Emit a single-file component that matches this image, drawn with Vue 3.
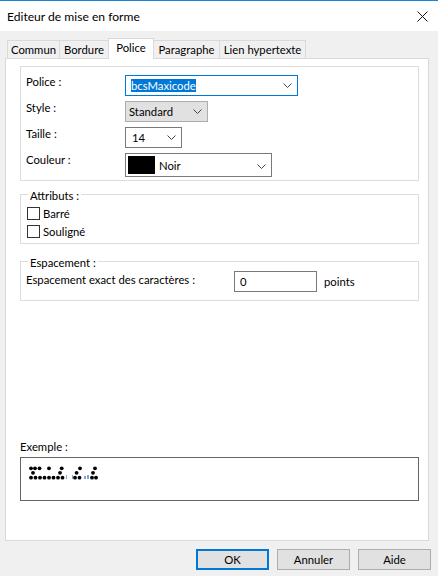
<script setup>
const tabs = [
  { label: 'Commun', width: 53 },
  { label: 'Bordure', width: 50 },
  { label: 'Police', width: 46, active: true },
  { label: 'Paragraphe', width: 67 },
  { label: 'Lien hypertexte', width: 87 },
]

// le rendu de la police bcsMaxicode : des points sur trois lignes
const dots = [
  ...[31, 35, 39.5, 49, 61.7, 80, 95].map(x => [x, 468.3]),
  ...[33, 60, 76.6, 93].map(x => [x, 472.8]),
  ...[31, 35.5, 40, 44.5, 49, 53.5, 58, 62.5, 75, 79.5, 92, 96].map(x => [x, 477.7]),
]
const bits = [[66, 475, 1, 4], [72, 475, 1, 4], [84, 476, 2, 3], [87, 475, 2, 4]]
</script>

<template>
  <div class="dialog">
    <div class="titlebar">
      <span>Editeur de mise en forme</span>
      <svg class="close" width="11" height="11" viewBox="0 0 11 11">
        <path d="M0.5 0.5 L10.5 10.5 M10.5 0.5 L0.5 10.5" stroke="#111" fill="none" />
      </svg>
    </div>

    <div class="content">
      <div class="tabs">
        <div
          v-for="tab in tabs"
          :key="tab.label"
          class="tab"
          :class="{ active: tab.active }"
          :style="{ width: tab.width + 'px' }"
        >{{ tab.label }}</div>
      </div>

      <div class="panel">
        <div class="group font-group">
          <div class="row">
            <label>Police :</label>
            <div class="select focused" style="width: 173px">
              <span class="selected-text">bcsMaxicode</span>
              <svg class="chevron" width="9" height="5" viewBox="0 0 9 5"><path d="M0.5 0.5 L4.5 4.5 L8.5 0.5" /></svg>
            </div>
          </div>
          <div class="row">
            <label>Style :</label>
            <div class="select readonly" style="width: 83px">
              <span>Standard</span>
              <svg class="chevron" width="9" height="5" viewBox="0 0 9 5"><path d="M0.5 0.5 L4.5 4.5 L8.5 0.5" /></svg>
            </div>
          </div>
          <div class="row">
            <label>Taille :</label>
            <div class="select size" style="width: 57px">
              <span>14</span>
              <svg class="chevron" width="9" height="5" viewBox="0 0 9 5"><path d="M0.5 0.5 L4.5 4.5 L8.5 0.5" /></svg>
            </div>
          </div>
          <div class="row">
            <label>Couleur :</label>
            <div class="select color" style="width: 147px">
              <i class="swatch"></i>
              <span>Noir</span>
              <svg class="chevron" width="9" height="5" viewBox="0 0 9 5"><path d="M0.5 0.5 L4.5 4.5 L8.5 0.5" /></svg>
            </div>
          </div>
        </div>

        <div class="group attr-group">
          <span class="legend">Attributs :</span>
          <div class="check"><i></i>Barré</div>
          <div class="check"><i></i>Souligné</div>
        </div>

        <div class="group space-group">
          <span class="legend">Espacement :</span>
          <label>Espacement exact des caractères :</label>
          <div class="num">0</div>
          <span class="unit">points</span>
        </div>

        <div class="example-label">Exemple :</div>
        <div class="example">
          <svg width="100" height="20" viewBox="21 462 100 20">
            <circle v-for="(d, i) in dots" :key="i" :cx="d[0]" :cy="d[1]" r="1.9" />
            <rect v-for="(b, i) in bits" :key="'b' + i" :x="b[0]" :y="b[1]" :width="b[2]" :height="b[3]" fill="#7aa6d8" />
          </svg>
        </div>
      </div>

      <div class="buttons">
        <button class="default">OK</button>
        <button>Annuler</button>
        <button>Aide</button>
      </div>
    </div>
  </div>
</template>

<style>
html, body {
  margin: 0;
  background: #f0f0f0;
}
</style>

<style scoped>
.dialog {
  width: 438px;
  height: 576px;
  box-sizing: border-box;
  border-top: 1px solid #1883d7;
  background: #f0f0f0;
  font-family: Lato, "Noto Sans", sans-serif;
  font-size: 11.3px;
  color: #000;
  display: flex;
  flex-direction: column;
  overflow: hidden;
}

.titlebar {
  height: 30px;
  flex: none;
  background: #fff;
  display: flex;
  align-items: center;
  justify-content: space-between;
  padding: 0 10px 0 7px;
  font-size: 12.1px;
}

.content {
  flex: 1;
  padding: 7px 7px 0 5px;
  display: flex;
  flex-direction: column;
}

.tabs {
  display: flex;
  height: 20px;
  padding-left: 2px;
  align-items: flex-end;
}

.tab {
  box-sizing: border-box;
  height: 18px;
  margin-right: -1px;
  border: 1px solid #d9d9d9;
  border-bottom: none;
  background: #f0f0f0;
  text-align: center;
  line-height: 18px;
}

.tab.active {
  background: #fff;
  position: relative;
  z-index: 1;
  margin-bottom: -1px;
  height: 21px;
  line-height: 17px;
}

.panel {
  box-sizing: border-box;
  width: 424px;
  height: 483px;
  background: #fff;
  border: 1px solid #d9d9d9;
  padding: 7px 9px 0 14px;
}

.group {
  position: relative;
  box-sizing: border-box;
  border: 1px solid #dcdcdc;
}

.font-group {
  height: 115px;
  padding: 8px 0 0 5px;
}

.row {
  display: flex;
  height: 26px;
}

.row label {
  width: 99px;
  flex: none;
}

.select {
  box-sizing: border-box;
  height: 21px;
  border: 1px solid #7a7a7a;
  background: #fff;
  position: relative;
  display: flex;
  align-items: center;
  padding-left: 5px;
}

.select.focused {
  border-color: #0078d7;
}

.select.readonly {
  background: #e1e1e1;
  border-color: #adadad;
  padding-left: 3px;
}

.select.size {
  padding-left: 6px;
}

.select.color {
  height: 24px;
  padding-left: 2px;
}

.selected-text {
  background: #0078d7;
  color: #fff;
}

.swatch {
  width: 27px;
  height: 18px;
  background: #000;
  margin-right: 4px;
}

.chevron {
  position: absolute;
  right: 5px;
  top: 7px;
  fill: none;
  stroke: #444;
}

.color .chevron {
  top: 10px;
}

.attr-group {
  margin-top: 13px;
  height: 50px;
  padding: 9px 0 0 6px;
}

.legend {
  position: absolute;
  top: -7px;
  left: 7px;
  padding: 0 2px;
  background: #fff;
  line-height: 15px;
}

.check {
  display: flex;
  align-items: center;
  height: 18px;
}

.check i {
  box-sizing: border-box;
  width: 13px;
  height: 13px;
  border: 1px solid #333;
  margin-right: 3px;
}

.space-group {
  margin-top: 17px;
  height: 40px;
  padding: 9px 0 0 5px;
  display: flex;
  align-items: flex-start;
}

.space-group label {
  width: 208px;
  flex: none;
  margin-top: 2px;
}

.num {
  box-sizing: border-box;
  width: 83px;
  height: 21px;
  border: 1px solid #7a7a7a;
  padding-left: 5px;
  line-height: 19px;
}

.unit {
  margin: 4px 0 0 7px;
}

.example-label {
  margin-top: 138px;
  line-height: 15px;
}

.example {
  box-sizing: border-box;
  height: 44px;
  margin-top: 3px;
  border: 1px solid #646464;
  padding: 4px 0 0 0;
}

.example svg {
  display: block;
  fill: #000;
}

.buttons {
  display: flex;
  justify-content: flex-end;
  gap: 8px;
  margin-top: 8px;
}

button {
  box-sizing: border-box;
  width: 73px;
  height: 21px;
  padding: 0;
  background: #e1e1e1;
  border: 1px solid #adadad;
  font: inherit;
  color: #000;
}

button.default {
  border: 2px solid #0078d7;
}
</style>
